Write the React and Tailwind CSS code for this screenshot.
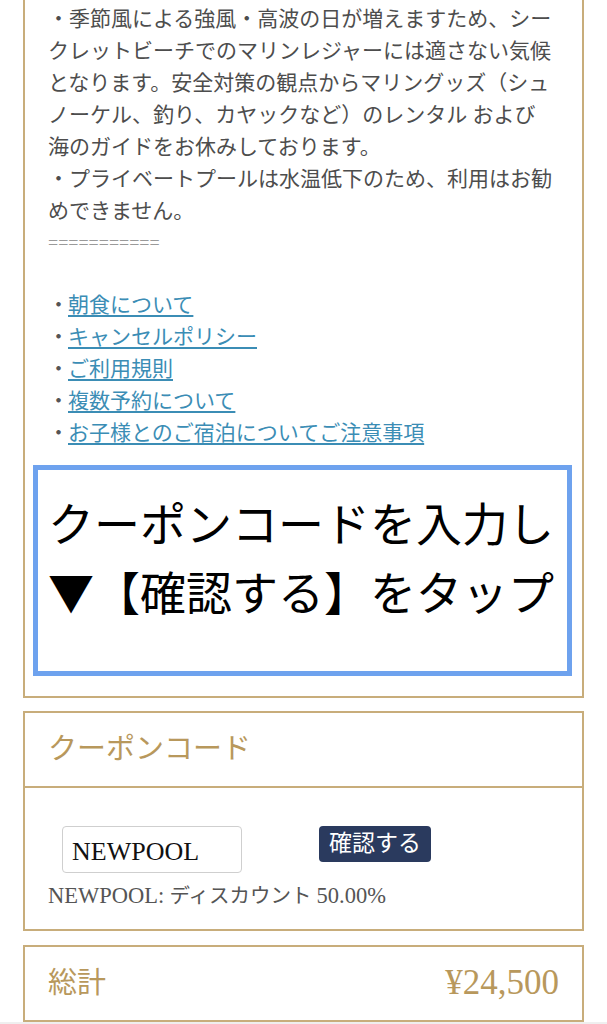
import React from 'react';

const SERIF = { fontFamily: '"Liberation Serif", "Noto Sans CJK JP", serif' };

const LINKS = [
  '朝食について',
  'キャンセルポリシー',
  'ご利用規則',
  '複数予約について',
  'お子様とのご宿泊についてご注意事項',
];

export default function App() {
  return (
    <div className="w-[607px] min-h-[1024px] bg-white" style={SERIF}>
      {/* notes panel */}
      <div className="mx-[23px] border-x-2 border-b-2 border-[#c8ad7b] pt-[3px] pb-[20px]">
        <div className="px-[23px] text-[21px] leading-[32px] text-[#4d4d4d]">
          <p>
            ・季節風による強風・高波の日が増えますため、シー<br />
            クレットビーチでのマリンレジャーには適さない気候<br />
            となります。安全対策の観点からマリングッズ（シュ<br />
            ノーケル、釣り、カヤックなど）のレンタル および<br />
            海のガイドをお休みしております。<br />
            ・プライベートプールは水温低下のため、利用はお勧<br />
            めできません。
          </p>
          <p className="text-[#9a9a9a] text-[18px]">===========</p>
          <div className="h-[30px]" />
          <ul>
            {LINKS.map((l) => (
              <li key={l} className="flex">
                <span className="text-[#555] w-[20px] shrink-0">・</span>
                <a href="#" className="text-[#3b8db5] underline underline-offset-[3px] decoration-[1.5px]">
                  {l}
                </a>
              </li>
            ))}
          </ul>
        </div>
        <div
          className="mt-[16px] ml-[8px] mr-[10px] border-[5px] border-[#6ea2ee] pl-[10px] pt-[17px] pb-[46px] text-[46px] leading-[69px] text-black whitespace-nowrap"
          style={{ fontFamily: '"Noto Sans CJK JP", sans-serif' }}
        >
          <p>クーポンコードを入力し</p>
          <p>▼【確認する】をタップ</p>
        </div>
      </div>

      {/* coupon panel */}
      <div className="mx-[23px] mt-[13px] border-2 border-[#c8ad7b]">
        <div className="h-[75px] flex items-center px-[23px] border-b-2 border-[#c8ad7b] text-[29px] text-[#b8985c]">
          クーポンコード
        </div>
        <div className="px-[23px] pt-[38px] pb-[18px]">
          <div className="flex items-start pl-[14px]">
            <input
              readOnly
              value="NEWPOOL"
              className="w-[180px] h-[47px] border border-[#cfcfcf] rounded-[4px] px-[9px] pt-[5px] text-[26px] text-[#111] outline-none"
              style={SERIF}
            />
            <button className="ml-[77px] h-[36px] px-[10px] rounded-[4px] bg-[#2a3a5e] text-white text-[23px] leading-[36px]">
              確認する
            </button>
          </div>
          <p className="mt-[8px] text-[20.5px] leading-[30px] text-[#555]">
            <span className="text-[22.5px]">NEWPOOL:</span> ディスカウント <span className="text-[22.5px]">50.00%</span>
          </p>
        </div>
      </div>

      {/* total panel */}
      <div className="mx-[23px] mt-[14px] border-2 border-[#c8ad7b] h-[77px] px-[23px] flex items-center justify-between text-[29px] text-[#b8985c]">
        <span>総計</span>
        <span className="text-[35px]">¥24,500</span>
      </div>
      <div className="h-[6px] bg-[#efefef]" />
    </div>
  );
}
